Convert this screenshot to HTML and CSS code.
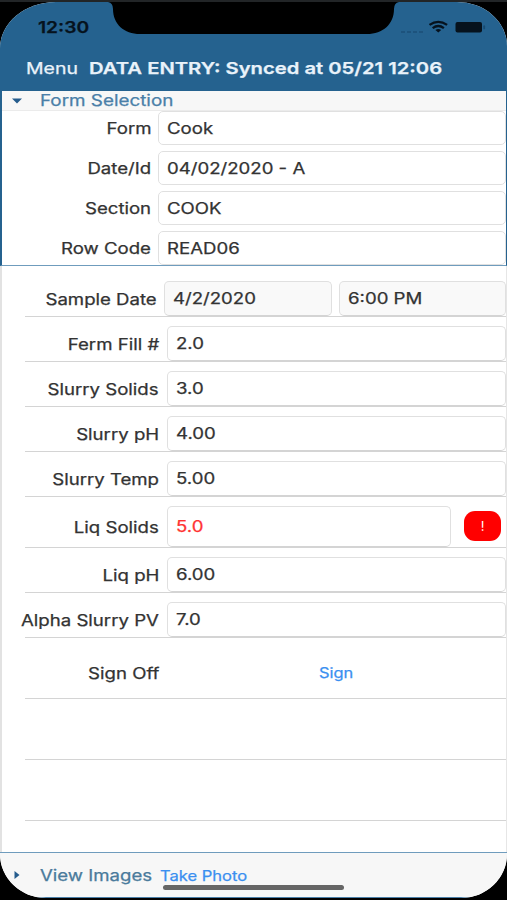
FILE: index.html
```html
<!DOCTYPE html>
<html lang="en">
<head>
    <meta charset="UTF-8">
    <meta name="viewport" content="width=device-width, initial-scale=1.0">
    <title>Data Entry</title>
    <link rel="stylesheet" href="styles.css">
</head>
<body>
    <div class="phone">
        <svg class="notch" width="291" height="32" viewBox="0 0 291 32">
            <path d="M0 0 Q5 1 5 7 C5 22 16 32 32 32 H259 C275 32 286 22 286 7 Q286 1 291 0 Z" fill="#000"/>
        </svg>
        <div class="status">
            <span class="time">12:30</span>
            <svg class="signal" width="86" height="14" viewBox="0 0 86 14">
                <g fill="#1d537d">
                    <rect x="0" y="11" width="4" height="2"/>
                    <rect x="6" y="11" width="4" height="2"/>
                    <rect x="12" y="11" width="4" height="2"/>
                    <rect x="18" y="11" width="4" height="2"/>
                </g>
                <g fill="none" stroke="#06121d" stroke-width="2.3">
                    <path d="M28.5 4.9 Q37.3 -1.3 46.1 4.9"/>
                    <path d="M31.7 8.2 Q37.3 3.9 42.9 8.2"/>
                </g>
                <path d="M34.4 10 Q37.3 7.8 40.2 10 L37.3 12.6 Z" fill="#06121d"/>
                <rect x="54.5" y="2" width="26.5" height="10.5" rx="2" fill="#06121d"/>
                <rect x="82.3" y="5.3" width="1.8" height="4" rx="0.9" fill="#174b72"/>
            </svg>
        </div>
        <div class="navbar">
            <span class="menu">Menu</span>
            <span class="title">DATA ENTRY: Synced at 05/21 12:06</span>
        </div>

        <div class="selection">
            <div class="section-head">
                <svg class="arrow" width="10" height="6" viewBox="0 0 10 6"><path d="M0 0.5 H10 L5 5.5 Z" fill="#255c8d"/></svg>
                <span class="head-text">Form Selection</span>
            </div>
            <div class="pick"><label><span>Form</span></label><div class="field"><span>Cook</span></div></div>
            <div class="pick"><label><span>Date/Id</span></label><div class="field"><span>04/02/2020 - A</span></div></div>
            <div class="pick"><label><span>Section</span></label><div class="field"><span>COOK</span></div></div>
            <div class="pick last"><label><span>Row Code</span></label><div class="field"><span>READ06</span></div></div>
        </div>

        <div class="entries">
            <div class="row date"><label><span>Sample Date</span></label><div class="field day"><span>4/2/2020</span></div><div class="field hour"><span>6:00 PM</span></div></div>
            <div class="row"><label><span>Ferm Fill #</span></label><div class="field"><span>2.0</span></div></div>
            <div class="row"><label><span>Slurry Solids</span></label><div class="field"><span>3.0</span></div></div>
            <div class="row"><label><span>Slurry pH</span></label><div class="field"><span>4.00</span></div></div>
            <div class="row"><label><span>Slurry Temp</span></label><div class="field"><span>5.00</span></div></div>
            <div class="row warn"><label><span>Liq Solids</span></label><div class="field"><span>5.0</span></div><div class="badge">!</div></div>
            <div class="row"><label><span>Liq pH</span></label><div class="field"><span>6.00</span></div></div>
            <div class="row"><label><span>Alpha Slurry PV</span></label><div class="field"><span>7.0</span></div></div>
            <div class="row tall"><label><span>Sign Off</span></label><div class="sign"><span>Sign</span></div></div>
            <div class="row tall"></div>
            <div class="row tall"></div>
        </div>

        <div class="footer">
            <svg class="arrow" width="6" height="8" viewBox="0 0 6 8"><path d="M0.5 0 V8 L5.5 4 Z" fill="#255c8d"/></svg>
            <span class="images">View Images</span>
            <span class="photo">Take Photo</span>
            <div class="home"></div>
        </div>
    </div>
</body>
</html>
```
FILE: styles.css
```css
*{
    box-sizing: border-box;
}
body{
    margin: 0;
    width: 507px;
    height: 900px;
    overflow: hidden;
    background: #000;
    border-top: 2px solid #222527;
    font-family: Inter, "Liberation Sans", sans-serif;
    font-size: 15.5px;
    color: #333;
}
.phone{
    position: relative;
    height: 896px;
    background: #fff;
    border-radius: 56px 50px 46px 46px / 46px 44px 44px 44px;
    overflow: hidden;
    display: flex;
    flex-direction: column;
}
/* the text runs wide, so every label is stretched from its own edge */
span{
    display: inline-block;
    white-space: nowrap;
    transform: scaleX(1.2);
    transform-origin: left center;
    -webkit-text-stroke: 0.25px currentColor;
}
.notch{
    position: absolute;
    left: 108px;
    top: 0;
}
.status{
    height: 44px;
    background: #25628f;
    display: flex;
    align-items: center;
    padding: 5px 0 0 38px;
}
.time{
    width: 363px;
    font-weight: 600;
    font-size: 16px;
    color: #06121d;
}
.signal{
    flex: none;
}
.navbar{
    height: 45px;
    background: #25628f;
    color: #e9f2fa;
    display: flex;
    align-items: center;
    padding: 0 0 2px 26px;
}
.menu{
    width: 63px;
    font-size: 16.5px;
    transform: scaleX(1.18);
}
.title{
    font-size: 16.5px;
    font-weight: 600;
    transform: scaleX(1.226);
}
.selection{
    height: 175px;
    border-left: 2px solid #25628f;
    border-right: 1px solid #25628f;
    border-bottom: 1px solid #6f9cbd;
    overflow: hidden;
}
.section-head{
    height: 20px;
    background: #f7f7f7;
    border-bottom: 1px solid #ebebeb;
    display: flex;
    align-items: center;
    color: #4a7fa8;
}
.section-head .arrow{
    margin-left: 10px;
    margin-right: 18px;
}
.head-text{
    transform: scaleX(1.215);
}
.pick{
    height: 34px;
    margin-bottom: 6px;
    display: flex;
}
.pick label{
    width: 149px;
    margin-right: 7px;
}
label{
    flex: none;
    display: flex;
    align-items: center;
    justify-content: flex-end;
}
label span{
    transform-origin: right center;
}
.field{
    flex: 1;
    border: 1px solid #e0e0e0;
    border-radius: 5px;
    padding-left: 7.5px;
    display: flex;
    align-items: center;
    background: #fff;
}
.entries{
    height: 586px;
    padding: 6px 0 0 23px;
    border-left: 2px solid #e2e2e2;
    border-right: 1px solid #e6e6e6;
}
.row{
    height: 45px;
    padding-top: 9px;
    border-bottom: 1px solid #d4d4d4;
    display: flex;
}
.row label{
    width: 134px;
    margin-right: 8px;
    padding-top: 2px;
}
.row .field{
    border-bottom-color: #d4d4d4;
}
.date label{
    width: 132px;
    margin-right: 7px;
}
.date .field{
    background: #f9f9f9;
}
.date .day{
    flex: none;
    width: 168px;
    margin-right: 7px;
}
.warn{
    height: 51px;
}
.warn .field{
    flex: none;
    width: 284px;
    color: #f33;
}
.badge{
    width: 37px;
    height: 30px;
    margin: 5px 0 0 13px;
    border-radius: 11px;
    background: #f00;
    color: #fff;
    font-size: 13px;
    line-height: 31px;
    text-align: center;
}
.tall{
    height: 61px;
}
.sign{
    margin-left: 152px;
    display: flex;
    align-items: center;
    color: #3a8ff0;
    font-size: 14px;
}
.sign span{
    transform: scaleX(1.17);
}
.footer{
    position: relative;
    flex: 1;
    background: #f7f7f7;
    border-top: 1px solid #6f9cbd;
    border-bottom: 1px solid #4a7fa8;
    display: flex;
    align-items: center;
    color: #4a7b9c;
    padding-left: 14px;
}
.images{
    width: 120px;
    margin-left: 20px;
}
.photo{
    font-size: 14px;
    color: #3a8ff0;
    transform: scaleX(1.18);
}
.home{
    position: absolute;
    left: 163px;
    bottom: 7px;
    width: 181px;
    height: 5px;
    border-radius: 3px;
    background: #666;
}
```
